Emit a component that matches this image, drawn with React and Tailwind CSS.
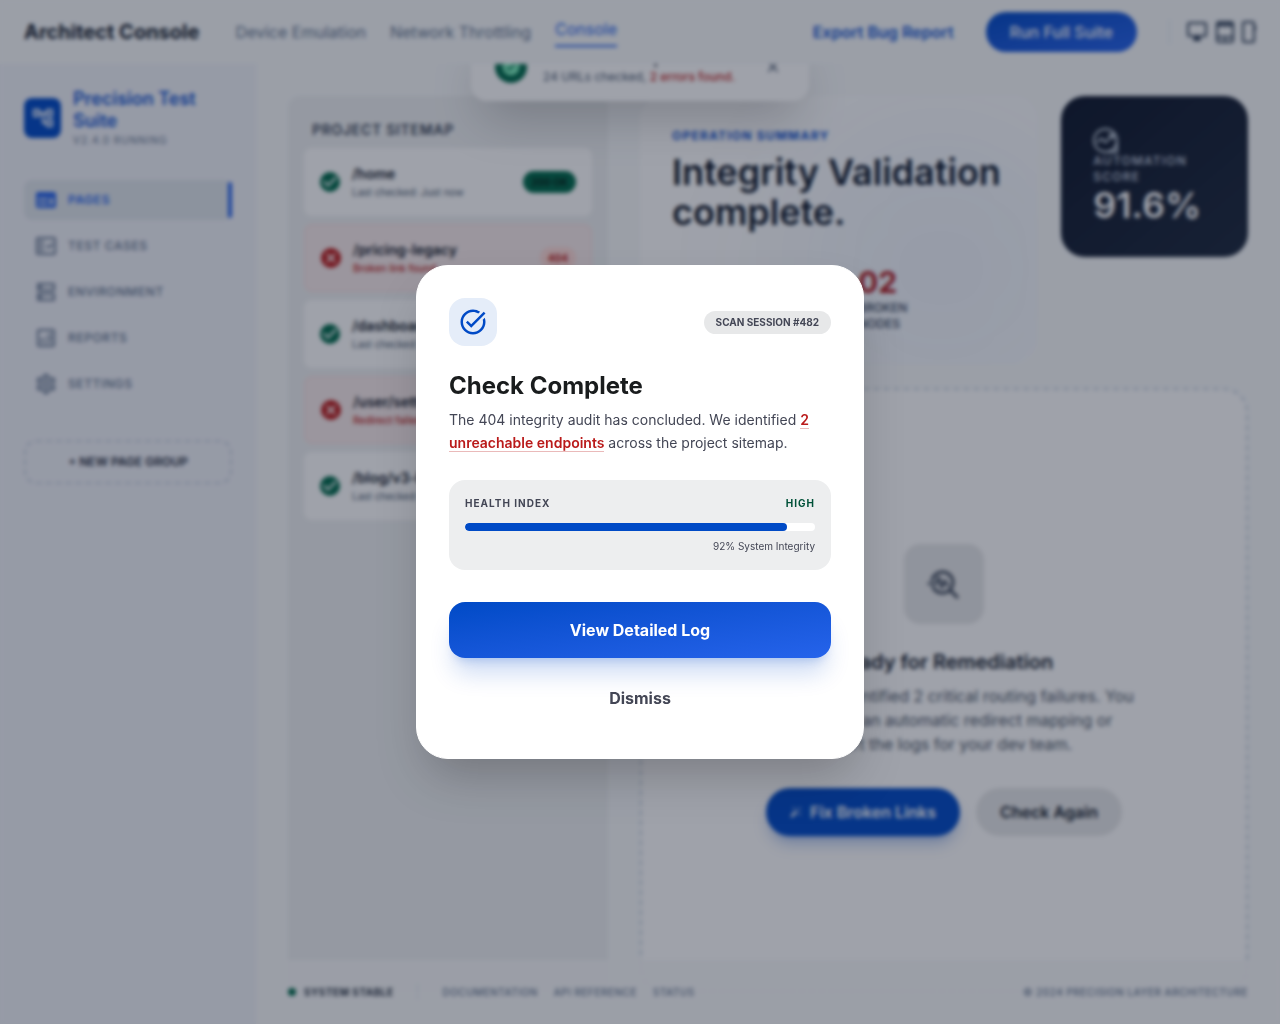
import React from "react";
import {
  MdOutlineAccountTree,
  MdOutlineFactCheck,
  MdOutlineDns,
  MdOutlineAnalytics,
  MdOutlineSettings,
  MdClose,
  MdVerified,
  MdAutoFixHigh,
  MdTaskAlt,
  MdTroubleshoot,
} from "react-icons/md";

function PagesIcon({ className }) {
  return (
    <svg viewBox="0 0 24 24" className={className} fill="currentColor" fillRule="evenodd" aria-hidden="true">
      <path d="M4 4h16a2 2 0 0 1 2 2v12a2 2 0 0 1-2 2H4a2 2 0 0 1-2-2V6c0-1.1.9-2 2-2Zm0 6v2h10v-2H4Zm0 5v2h10v-2H4Zm12-5v7h3v-7h-3Z" />
    </svg>
  );
}

const navItems = [
  { label: "Pages", icon: PagesIcon, active: true },
  { label: "Test Cases", icon: MdOutlineFactCheck },
  { label: "Environment", icon: MdOutlineDns },
  { label: "Reports", icon: MdOutlineAnalytics },
  { label: "Settings", icon: MdOutlineSettings },
];

const pages = [
  { path: "/home", note: "Last checked: Just now", ok: true, badge: "200 OK" },
  { path: "/pricing-legacy", note: "Broken link found", ok: false, badge: "404" },
  { path: "/dashboard", note: "Last checked: 2m ago", ok: true },
  { path: "/user/settings", note: "Redirect failed", ok: false },
  { path: "/blog/v3-launch", note: "Last checked: 5m ago", ok: true },
];

function StatusIcon({ ok }) {
  return ok ? (
    <svg viewBox="2 2 20 20" className="size-5 shrink-0 text-[#006a4b]" fill="currentColor" aria-hidden="true">
      <path d="M12 2a10 10 0 1 0 0 20 10 10 0 0 0 0-20Zm-2 15-5-5 1.41-1.41L10 14.17l7.59-7.59L19 8l-9 9Z" />
    </svg>
  ) : (
    <svg viewBox="2 2 20 20" className="size-5 shrink-0 text-[#ba1a1a]" fill="currentColor" aria-hidden="true">
      <path d="M12 2a10 10 0 1 0 0 20 10 10 0 0 0 0-20Zm5 13.59L15.59 17 12 13.41 8.41 17 7 15.59 10.59 12 7 8.41 8.41 7 12 10.59 15.59 7 17 8.41 13.41 12 17 15.59Z" />
    </svg>
  );
}

function DeviceIcons() {
  return (
    <div className="flex h-6 items-center gap-2 border-l border-slate-200 pl-4 text-slate-700">
      <svg viewBox="0 0 22 22" className="h-[22px] w-[22px]" fill="none" stroke="currentColor" strokeWidth="2" aria-hidden="true">
        <rect x="2" y="2" width="18" height="13" rx="1.5" />
        <path d="M9 15h4v3H9z" fill="currentColor" />
        <path d="M7 19h8" />
      </svg>
      <svg viewBox="0 0 18 22" className="h-[22px] w-[18px]" fill="none" stroke="currentColor" strokeWidth="2" aria-hidden="true">
        <rect x="1" y="1" width="16" height="20" rx="2" />
        <path d="M1 4h16" strokeWidth="3" />
        <path d="M1 16h16M8 18.5h2" />
      </svg>
      <svg viewBox="0 0 14 22" className="h-[22px] w-[14px]" fill="none" stroke="currentColor" strokeWidth="2" aria-hidden="true">
        <rect x="1" y="1" width="11" height="20" rx="1.5" />
        <path d="M13 5v4" />
      </svg>
    </div>
  );
}

function Header() {
  return (
    <header className="fixed inset-x-0 top-0 z-30 flex h-16 items-center justify-between bg-[#f8fafb] px-6">
      <div className="flex items-center gap-9">
        <h1 className="text-xl font-bold text-gray-900">Architect Console</h1>
        <nav className="flex items-center gap-6 text-slate-500">
          <a href="#devices">Device Emulation</a>
          <a href="#network">Network Throttling</a>
          <a href="#console" className="border-b-2 border-[#2563eb] pb-1 text-[#2563eb]">Console</a>
        </nav>
      </div>
      <div className="flex items-center gap-8">
        <button className="font-semibold text-[#1253d0]">Export Bug Report</button>
        <button className="h-10 rounded-full bg-linear-to-br from-[#004ac6] to-[#2563eb] px-6 font-medium text-white">
          Run Full Suite
        </button>
        <DeviceIcons />
      </div>
    </header>
  );
}

function Toast() {
  return (
    <div className="fixed left-1/2 top-[33px] z-20 flex w-[338px] -translate-x-1/2 items-center gap-4 rounded-2xl bg-white px-6 py-4 shadow-2xl">
      <div className="flex size-8 shrink-0 items-center justify-center rounded-full bg-[#006a4b] text-[#82f5c1]">
        <MdVerified className="size-5" />
      </div>
      <div className="flex-1">
        <p className="text-sm font-bold text-gray-900">Link Check Complete</p>
        <p className="text-xs text-slate-600">
          24 URLs checked, <span className="font-medium text-[#ba1a1a]">2 errors found.</span>
        </p>
      </div>
      <button aria-label="Close" className="flex size-6 items-center justify-center text-slate-600">
        <MdClose className="size-[18px]" />
      </button>
    </div>
  );
}

function Sidebar() {
  return (
    <aside className="fixed bottom-0 left-0 top-16 w-64 bg-[#f1f3f9] p-6">
      <div className="mb-8 flex items-center gap-3">
        <div className="flex h-10 w-[37px] shrink-0 items-center justify-center rounded-lg bg-[#004ac6] text-white">
          <MdOutlineAccountTree className="size-6" />
        </div>
        <div>
          <h2 className="text-lg font-semibold leading-[22px] text-[#1253d0]">Precision Test Suite</h2>
          <p className="text-[10px] uppercase leading-4 tracking-widest text-slate-500">v2.4.0 Running</p>
        </div>
      </div>
      <nav className="flex flex-col gap-[6px]">
        {navItems.map(({ label, icon: Icon, active }) => (
          <a
            key={label}
            href={"#" + label}
            className={
              active
                ? "flex h-10 items-center gap-[10px] rounded-lg bg-[#e0e6ec] pl-[10px] text-xs font-semibold uppercase tracking-wider text-[#2563eb]"
                : "flex h-10 items-center gap-[10px] rounded-lg px-[10px] text-xs font-medium uppercase tracking-wider text-slate-500"
            }
          >
            <Icon className="size-6" />
            {label}
            {active && <span className="ml-auto h-9 w-1 rounded-full bg-[#2563eb]" />}
          </a>
        ))}
      </nav>
      <button className="mt-9 h-11 w-full rounded-xl border-2 border-dashed border-slate-300 text-xs font-semibold uppercase text-gray-800">
        + New Page Group
      </button>
    </aside>
  );
}

function Sitemap() {
  return (
    <section className="w-80 shrink-0 rounded-xl bg-[#eff1f2] p-4">
      <h3 className="mb-2 mt-2 px-2 text-sm font-semibold uppercase tracking-wider text-gray-700">Project Sitemap</h3>
      <ul className="flex flex-col gap-2">
        {pages.map((page) => (
          <li
            key={page.path}
            className={
              page.ok
                ? "flex items-center gap-3 rounded-lg bg-white p-4"
                : "flex items-center gap-3 rounded-lg border border-red-200/40 bg-[#f8ebeb] p-[15px] pl-4"
            }
          >
            <StatusIcon ok={page.ok} />
            <div className="flex-1">
              <p className="text-sm font-semibold text-gray-900">{page.path}</p>
              <p className={page.ok ? "text-[10px] leading-4 text-slate-600" : "text-[10px] font-medium leading-4 text-[#ba1a1a]"}>
                {page.note}
              </p>
            </div>
            {page.badge && (
              <span
                className={
                  page.ok
                    ? "rounded-full bg-[#006a4b] px-2 py-1 text-[10px] font-bold leading-[14px] text-[#002114]"
                    : "rounded-full bg-[#ffdad6] px-2 py-1 text-[10px] font-bold leading-[14px] text-[#ba1a1a]"
                }
              >
                {page.badge}
              </span>
            )}
          </li>
        ))}
      </ul>
    </section>
  );
}

function Summary() {
  return (
    <section className="relative col-span-2 overflow-hidden rounded-3xl bg-white p-8">
      <div className="absolute -bottom-16 -right-16 size-80 rounded-full bg-[#004ac6]/5 blur-3xl" />
      <p className="text-xs font-bold uppercase tracking-widest text-[#1253d0]">Operation Summary</p>
      <h2 className="mt-2 text-4xl font-semibold text-gray-900">Integrity Validation complete.</h2>
      <div className="mt-8 grid grid-cols-[154px_1fr] gap-8 text-gray-700">
        <div>
          <p className="text-3xl font-bold">24</p>
          <p className="w-16 text-xs font-medium uppercase">Total Nodes</p>
        </div>
        <div>
          <p className="text-3xl font-bold text-[#ba1a1a]">02</p>
          <p className="w-16 text-xs font-medium uppercase">Broken Nodes</p>
        </div>
      </div>
    </section>
  );
}

function ScoreCard() {
  return (
    <section className="self-start rounded-3xl bg-linear-to-br from-slate-900 to-slate-800 p-8 text-white">
      <svg viewBox="1 1 26 26" className="size-[25px] text-slate-300" fill="none" stroke="currentColor" strokeWidth="2" aria-hidden="true">
        <path d="M26 14v12H14A12 12 0 1 1 26 14c0 6-4 11-11 12" />
        <path d="m5 16 5-4 4 4 7-7M17 8h5v5" />
      </svg>
      <p className="text-xs font-medium uppercase tracking-widest text-slate-300">Automation Score</p>
      <p className="text-4xl font-semibold">91.6%</p>
    </section>
  );
}

function Remediation() {
  return (
    <section className="flex flex-1 flex-col items-center justify-center rounded-3xl border-2 border-dashed border-slate-300 bg-white text-center">
      <div className="flex size-20 items-center justify-center rounded-2xl bg-[#e7e8e9] text-gray-700">
        <MdTroubleshoot className="size-9" />
      </div>
      <h3 className="mt-6 text-xl font-semibold text-gray-900">Ready for Remediation</h3>
      <p className="mt-2 text-gray-600">
        The report identified 2 critical routing failures. You
        <br />
        can initiate an automatic redirect mapping or
        <br />
        export the logs for your dev team.
      </p>
      <div className="mt-8 flex gap-4">
        <button className="flex h-12 items-center gap-2 rounded-full bg-[#004ac6] px-6 font-semibold text-white shadow-lg shadow-[#004ac6]/30">
          <MdAutoFixHigh className="size-3" />
          Fix Broken Links
        </button>
        <button className="h-12 rounded-full bg-[#e7e8e9] px-6 font-semibold text-gray-900">Check Again</button>
      </div>
    </section>
  );
}

function Footer() {
  return (
    <footer className="fixed bottom-0 left-64 right-0 flex h-16 items-center justify-between bg-[#f8fafb]/90 px-8 text-[10px] font-medium uppercase tracking-wider text-slate-500">
      <div className="flex items-center gap-6">
        <p className="flex items-center gap-2 font-bold text-gray-800">
          <span className="size-2 rounded-full bg-[#006a4b]" />
          System Stable
        </p>
        <div className="flex h-4 items-center gap-4 border-l border-slate-200 pl-6">
          <a href="#docs">Documentation</a>
          <a href="#api">API Reference</a>
          <a href="#status">Status</a>
        </div>
      </div>
      <p>© 2024 Precision Layer Architecture</p>
    </footer>
  );
}

function CheckDialog() {
  return (
    <div className="fixed inset-0 z-50 flex items-center justify-center bg-slate-900/40 backdrop-blur-[2px]">
      <div
        role="dialog"
        aria-modal="true"
        aria-labelledby="dialog-title"
        className="w-full max-w-md rounded-[32px] border border-white bg-white p-8 shadow-2xl"
      >
        <div className="flex items-center justify-between">
          <div className="flex size-12 items-center justify-center rounded-2xl bg-[#e5edf9] text-[#004ac6]">
            <MdTaskAlt className="size-[30px]" />
          </div>
          <span className="rounded-full bg-[#e7e8e9] px-3 py-1 text-[10px] font-bold uppercase leading-[15px] text-[#434655]">
            Scan Session #482
          </span>
        </div>
        <h2 id="dialog-title" className="mt-6 text-2xl font-bold text-[#191c1d]">Check Complete</h2>
        <p className="mt-1.5 text-sm leading-[23px] text-[#434655]">
          The 404 integrity audit has concluded. We identified{" "}
          <span className="border-b border-[#ba1a1a]/30 font-semibold text-[#ba1a1a]">2 unreachable endpoints</span>{" "}
          across the project sitemap.
        </p>
        <div className="mt-6.5 rounded-2xl bg-[#edeeef] p-4 text-[10px] leading-[15px] text-[#434655]">
          <div className="flex justify-between font-bold uppercase tracking-widest">
            <span>Health Index</span>
            <span className="text-[#005138]">High</span>
          </div>
          <div className="mt-3 h-2 overflow-hidden rounded-full bg-white">
            <div className="h-full w-[92%] rounded-full bg-[#004ac6]" />
          </div>
          <p className="mt-2 text-right">92% System Integrity</p>
        </div>
        <button className="mt-8 h-14 w-full rounded-2xl bg-linear-to-br from-[#004ac6] to-[#2563eb] font-bold text-white shadow-xl shadow-[#004ac6]/20">
          View Detailed Log
        </button>
        <button className="mt-3 h-14 w-full rounded-2xl font-bold text-[#434655]">Dismiss</button>
      </div>
    </div>
  );
}

function App() {
  return (
    <div className="min-h-screen bg-[#f8fafb] font-['Inter',sans-serif]">
      <Header />
      <Toast />
      <Sidebar />
      <main className="ml-64 flex min-h-screen gap-8 px-8 pb-8 pt-24">
        <Sitemap />
        <div className="flex flex-1 flex-col gap-6">
          <div className="grid grid-cols-3 gap-6">
            <Summary />
            <ScoreCard />
          </div>
          <Remediation />
        </div>
      </main>
      <Footer />
      <CheckDialog />
    </div>
  );
}

export default App;
